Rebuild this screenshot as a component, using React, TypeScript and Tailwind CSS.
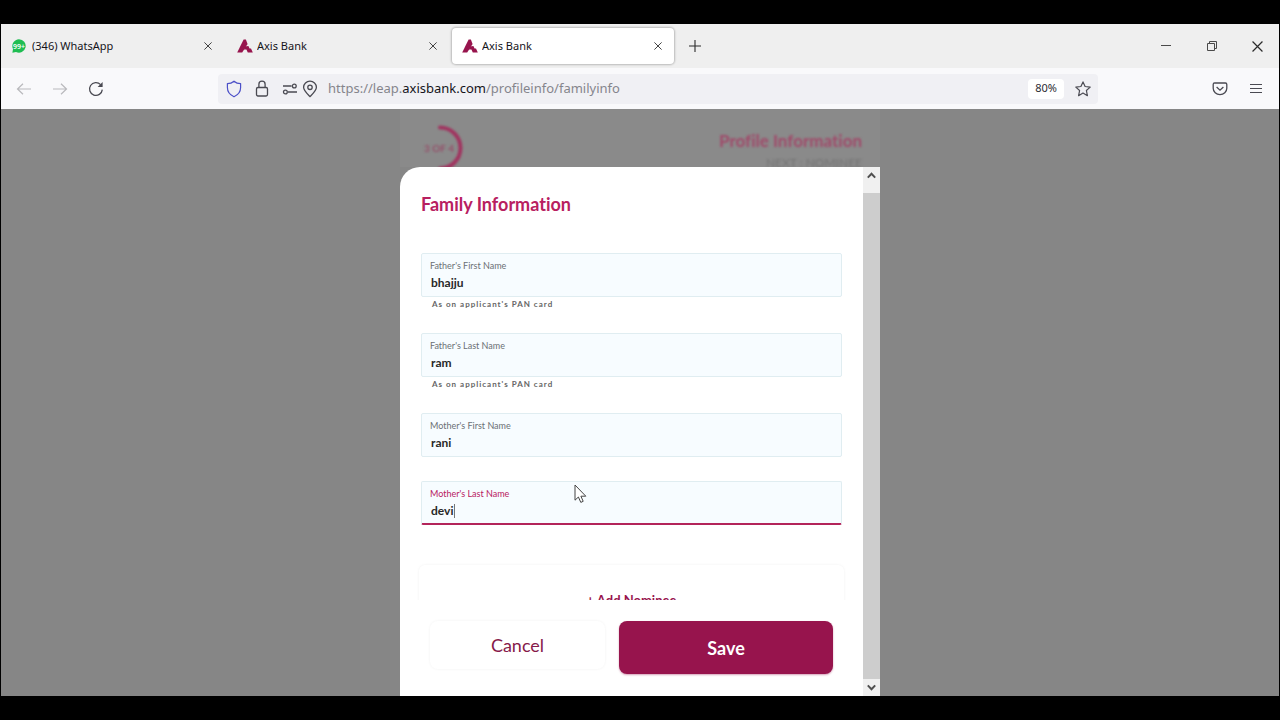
import { useState } from "react";
import type { ReactNode } from "react";

const UI_FONT = "font-['Noto_Sans','Open_Sans',sans-serif]";
const PAGE_FONT = "font-['Lato','Open_Sans',sans-serif] [font-variant-ligatures:none]";

function AxisLogo() {
  return (
    <svg width="16" height="14" viewBox="0 0 16 14" className="shrink-0" aria-hidden="true">
      <path d="M6.6 0.6H8.9L10.6 5L5.2 13.4H0.2Z" fill="#97144d" />
      <path d="M7.4 7.6L11.4 7L12.6 9.4H14L15.8 13.4H10.8L9.4 10.4H7Z" fill="#97144d" />
    </svg>
  );
}

function WhatsAppBadge() {
  return (
    <svg width="14" height="14" viewBox="0 0 14 14" className="shrink-0" aria-hidden="true">
      <path d="M7 0.3a6.7 6.7 0 1 1-3 12.7L0.4 13.7L1 10A6.7 6.7 0 0 1 7 0.3Z" fill="#1fbd52" />
      <text x="7" y="9.8" textAnchor="middle" fontSize="7" fontWeight="600" fill="#fff">
        99+
      </text>
    </svg>
  );
}

function CloseIcon({ size = 8 }: { size?: number }) {
  return (
    <svg width={size} height={size} viewBox="0 0 10 10" stroke="#2b2b2b" strokeWidth="1.1" fill="none">
      <path d="M0.5 0.5L9.5 9.5M9.5 0.5L0.5 9.5" />
    </svg>
  );
}

function Tab({ icon, title, active = false }: { icon: ReactNode; title: string; active?: boolean }) {
  return (
    <div
      className={`flex h-9 w-[222px] shrink-0 items-center rounded pl-2.5 pr-2 text-[#15141a] ${
        active ? "bg-white shadow-[0_0_2px_1px_rgba(0,0,0,0.22)]" : ""
      }`}
    >
      <span className="flex w-5 items-center">{icon}</span>
      <span className="flex-1 truncate text-[11px]">{title}</span>
      <button type="button" aria-label={`Close ${title}`} className="flex size-4 items-center justify-center">
        <CloseIcon />
      </button>
    </div>
  );
}

function IconButton({ label, children }: { label: string; children: ReactNode }) {
  return (
    <button type="button" aria-label={label} className="flex h-8 w-9 shrink-0 items-center justify-center">
      {children}
    </button>
  );
}

function TabBar() {
  return (
    <div className="flex h-11 items-center gap-[3px] bg-[#efefef] pl-px">
      <Tab icon={<WhatsAppBadge />} title="(346) WhatsApp" />
      <Tab icon={<AxisLogo />} title="Axis Bank" />
      <Tab icon={<AxisLogo />} title="Axis Bank" active />
      <IconButton label="New tab">
        <svg width="12" height="12" viewBox="0 0 12 12" stroke="#2b2b2b" strokeWidth="1.1">
          <path d="M6 0V12M0 6H12" />
        </svg>
      </IconButton>
      <div className="ml-auto flex">
        <button type="button" aria-label="Minimize" className="flex h-8 w-[46px] items-center justify-center">
          <svg width="10" height="10" viewBox="0 0 10 10" stroke="#4a4a4a">
            <path d="M0 4.5H10" />
          </svg>
        </button>
        <button type="button" aria-label="Restore" className="flex h-8 w-[46px] items-center justify-center">
          <svg width="10" height="10" viewBox="0 0 10 10" stroke="#4a4a4a" fill="none">
            <path d="M0.5 2.5H7.5V9.5H0.5ZM2.5 2.5V0.5H9.5V7.5H7.5" />
          </svg>
        </button>
        <button type="button" aria-label="Close window" className="flex h-8 w-11 items-center justify-center">
          <CloseIcon size={11} />
        </button>
      </div>
    </div>
  );
}

function AddressBar() {
  return (
    <div className="flex h-[30px] min-w-0 flex-1 items-center rounded-sm bg-[#f0f0f4] pl-2">
      <svg width="16" height="18" viewBox="0 0 16 18" fill="none" stroke="#4c50c8" strokeWidth="1.2" className="shrink-0">
        <path d="M8 1.2C9.8 2.8 12 3.6 14.6 3.6V7.6C14.6 11.8 12 15 8 16.8C4 15 1.4 11.8 1.4 7.6V3.6C4 3.6 6.2 2.8 8 1.2Z" strokeLinejoin="round" />
      </svg>
      <svg width="14" height="18" viewBox="0 0 14 18" fill="none" stroke="#4a4a52" strokeWidth="1.3" className="ml-[13px] shrink-0">
        <rect x="1.5" y="7.5" width="11" height="8.5" rx="1.4" />
        <path d="M3.9 7.5V4.2A3.1 3.1 0 0 1 10.1 4.2V7.5" />
      </svg>
      <svg width="16" height="12" viewBox="0 0 16 12" fill="none" stroke="#4a4a52" strokeWidth="1.3" className="ml-[13px] shrink-0">
        <path d="M1 3H9.6M6 9H15" />
        <circle cx="12.3" cy="3" r="1.9" />
        <circle cx="3.4" cy="9" r="1.9" />
      </svg>
      <svg width="16" height="18" viewBox="0 0 16 18" fill="none" stroke="#4a4a52" strokeWidth="1.3" className="ml-1 shrink-0">
        <path d="M8 16.6C5 13.6 1.6 10.6 1.6 7.3A6.4 6.2 0 0 1 14.4 7.3C14.4 10.6 11 13.6 8 16.6Z" />
        <circle cx="8" cy="7.3" r="2.2" />
      </svg>
      <a
        href="https://leap.axisbank.com/profileinfo/familyinfo"
        className="ml-2.5 flex-1 truncate text-[13px] text-[#85858c]"
      >
        https://leap.<span className="text-[#15141a]">axisbank.com</span>/profileinfo/familyinfo
      </a>
      <button type="button" className="h-5 w-9 shrink-0 rounded-sm bg-white text-[11px] text-[#2b2b33]">
        80%
      </button>
      <button type="button" aria-label="Bookmark this page" className="flex h-8 w-[34px] shrink-0 items-center justify-center pl-1">
        <svg width="16" height="16" viewBox="0 0 16 16" fill="none" stroke="#4a4a52" strokeWidth="1.2" strokeLinejoin="round">
          <path d="M8 0.9L10.1 5.5L15.2 6.1L11.4 9.5L12.4 14.7L8 12.1L3.6 14.7L4.6 9.5L0.8 6.1L5.9 5.5Z" />
        </svg>
      </button>
    </div>
  );
}

function Toolbar() {
  return (
    <div className="flex h-[41px] items-center bg-[#f9f9fb] px-[5px]">
      <IconButton label="Back">
        <svg width="16" height="12" viewBox="0 0 16 12" fill="none" stroke="#b9b9bd" strokeWidth="1.2">
          <path d="M15 6H1.5M7 0.7L1.5 6L7 11.3" />
        </svg>
      </IconButton>
      <IconButton label="Forward">
        <svg width="16" height="12" viewBox="0 0 16 12" fill="none" stroke="#b9b9bd" strokeWidth="1.2">
          <path d="M1 6H14.5M9 0.7L14.5 6L9 11.3" />
        </svg>
      </IconButton>
      <IconButton label="Reload">
        <svg width="16" height="16" viewBox="0 0 16 16" fill="none" stroke="#4a4a52" strokeWidth="1.3">
          <path d="M14.3 8.6A6.4 6.4 0 1 1 12.6 3.6" />
          <path d="M14.6 1V6H9.6Z" fill="#4a4a52" stroke="none" />
        </svg>
      </IconButton>
      <div className="mx-[104px] flex min-w-0 flex-1">
        <AddressBar />
      </div>
      <IconButton label="Save to Pocket">
        <svg width="16" height="14" viewBox="0 0 16 14" fill="none" stroke="#4a4a52" strokeWidth="1.3">
          <path d="M2.6 1H13.4A1.4 1.4 0 0 1 14.8 2.4V6.2A6.8 6.5 0 0 1 1.2 6.2V2.4A1.4 1.4 0 0 1 2.6 1Z" />
          <path d="M4.6 5L8 8.2L11.4 5" />
        </svg>
      </IconButton>
      <IconButton label="Open menu">
        <svg width="12" height="11" viewBox="0 0 12 11" stroke="#4a4a52" strokeWidth="1.2">
          <path d="M0 1.5H12M0 5.5H12M0 9.5H12" />
        </svg>
      </IconButton>
    </div>
  );
}

function PageHeader() {
  return (
    <header className="h-[58px] overflow-hidden bg-[#8a8a8a]">
      <div className="flex justify-between pl-[19px] pr-[18px] pt-4 blur-[1px]">
        <svg width="46" height="46" viewBox="0 0 46 46" fill="none" aria-label="3 of 4" role="img">
          <path d="M21 2.5A20.5 20.5 0 0 1 21 43.5" stroke="#a03560" strokeWidth="4" strokeLinecap="round" />
          <text x="20" y="27" textAnchor="middle" fontSize="10" fontWeight="700" fill="#95506a">
            3 OF 4
          </text>
        </svg>
        <div className="flex flex-col items-end">
          <h1 className="mt-1 text-[17px] leading-6 font-bold text-[#a04a6a]">Profile Information</h1>
          <p className="text-xs leading-5 text-[#747474]">NEXT : NOMINEE</p>
        </div>
      </div>
    </header>
  );
}

type FieldProps = {
  id: string;
  label: string;
  initial: string;
  hint?: string;
  focused?: boolean;
};

function Field({ id, label, initial, hint, focused = false }: FieldProps) {
  const [value, setValue] = useState(initial);
  return (
    <div>
      <div
        className={`relative flex h-11 flex-col rounded-xs border bg-[#f7fcff] px-2 pt-1.5 ${
          focused ? "border-[#e0edf1] border-b-2 border-b-[#b3245a]" : "border-[#e0edf1]"
        }`}
      >
        <label htmlFor={id} className={`text-[9px] leading-3 ${focused ? "text-[#b8205f]" : "text-[#6b7075]"}`}>
          {label}
        </label>
        <input
          id={id}
          value={value}
          onChange={(e) => setValue(e.target.value)}
          className="h-5 w-full bg-transparent pl-px text-xs font-bold text-[#282828] outline-none"
        />
        {focused && <span className="absolute left-8 top-[22px] h-3.5 w-px bg-[#777]" />}
      </div>
      {hint && <p className="h-3 pl-[11px] pt-px text-[8px] leading-3 font-bold tracking-[1px] text-[#666]">{hint}</p>}
    </div>
  );
}

function Scrollbar() {
  return (
    <div className="flex w-[17px] shrink-0 flex-col bg-[#cdcdcd]" aria-hidden="true">
      <div className="flex h-[26px] justify-center bg-[#f0f0f0] pt-[5px]">
        <svg width="9" height="7" viewBox="0 0 9 7" fill="none" stroke="#505050" strokeWidth="2">
          <path d="M0.8 5.6L4.5 1.8L8.2 5.6" />
        </svg>
      </div>
      <div className="mt-auto flex h-[17px] items-center justify-center bg-[#f0f0f0]">
        <svg width="9" height="7" viewBox="0 0 9 7" fill="none" stroke="#505050" strokeWidth="2">
          <path d="M0.8 1.4L4.5 5.2L8.2 1.4" />
        </svg>
      </div>
    </div>
  );
}

function FamilyDialog() {
  return (
    <section role="dialog" aria-labelledby="dialog-title" className="flex min-h-0 flex-1 overflow-hidden rounded-tl-[20px] bg-white">
      <form className="flex min-w-0 flex-1 flex-col" onSubmit={(e) => e.preventDefault()}>
        <div className="min-h-0 flex-1 overflow-hidden px-[21px] pt-[23px]">
          <h2 id="dialog-title" className="text-lg leading-7 font-bold text-[#b8205f]">
            Family Information
          </h2>
          <div className="mt-[35px] flex flex-col gap-6">
            <Field id="father-first" label="Father's First Name" initial="bhajju" hint="As on applicant's PAN card" />
            <Field id="father-last" label="Father's Last Name" initial="ram" hint="As on applicant's PAN card" />
            <Field id="mother-first" label="Mother's First Name" initial="rani" />
            <Field id="mother-last" label="Mother's Last Name" initial="devi" focused />
          </div>
          <div className="-mx-0.5 mt-10 flex">
            <button
              type="button"
              className="h-[72px] flex-1 rounded-md bg-white text-[13px] font-bold text-[#97144d] shadow-[0_0_3px_rgba(0,0,0,0.06)]"
            >
              + Add Nominee
            </button>
          </div>
        </div>
        <footer className="flex h-24 shrink-0 items-start gap-3.5 px-[30px] pt-[21px]">
          <button
            type="button"
            className="h-12 min-w-0 flex-[175] rounded-lg text-lg text-[#86194a] shadow-[0_0_3px_rgba(0,0,0,0.06)]"
          >
            Cancel
          </button>
          <button
            type="submit"
            className="h-[53px] min-w-0 flex-[214] rounded-lg bg-[#97144d] text-lg font-bold text-white shadow-[0_1px_2px_rgba(151,20,77,0.4)]"
          >
            Save
          </button>
        </footer>
      </form>
      <Scrollbar />
    </section>
  );
}

export default function App() {
  return (
    <div className={`relative flex h-screen flex-col overflow-hidden bg-black px-px py-6 ${UI_FONT}`}>
      <TabBar />
      <Toolbar />
      <main className={`flex min-h-0 flex-1 justify-center bg-[#868686] ${PAGE_FONT}`}>
        <div className="flex w-full max-w-[480px] flex-col">
          <PageHeader />
          <FamilyDialog />
        </div>
      </main>
      {/* mouse pointer */}
      <svg
        width="13"
        height="20"
        viewBox="0 0 13 20"
        className="pointer-events-none absolute left-[574px] top-[484px]"
        fill="#fff"
        stroke="#444"
        strokeWidth="1"
        aria-hidden="true"
      >
        <path d="M1 1V16.2L4.4 13L6.8 18.4L9.2 17.3L6.9 12.2H11.8Z" />
      </svg>
    </div>
  );
}
